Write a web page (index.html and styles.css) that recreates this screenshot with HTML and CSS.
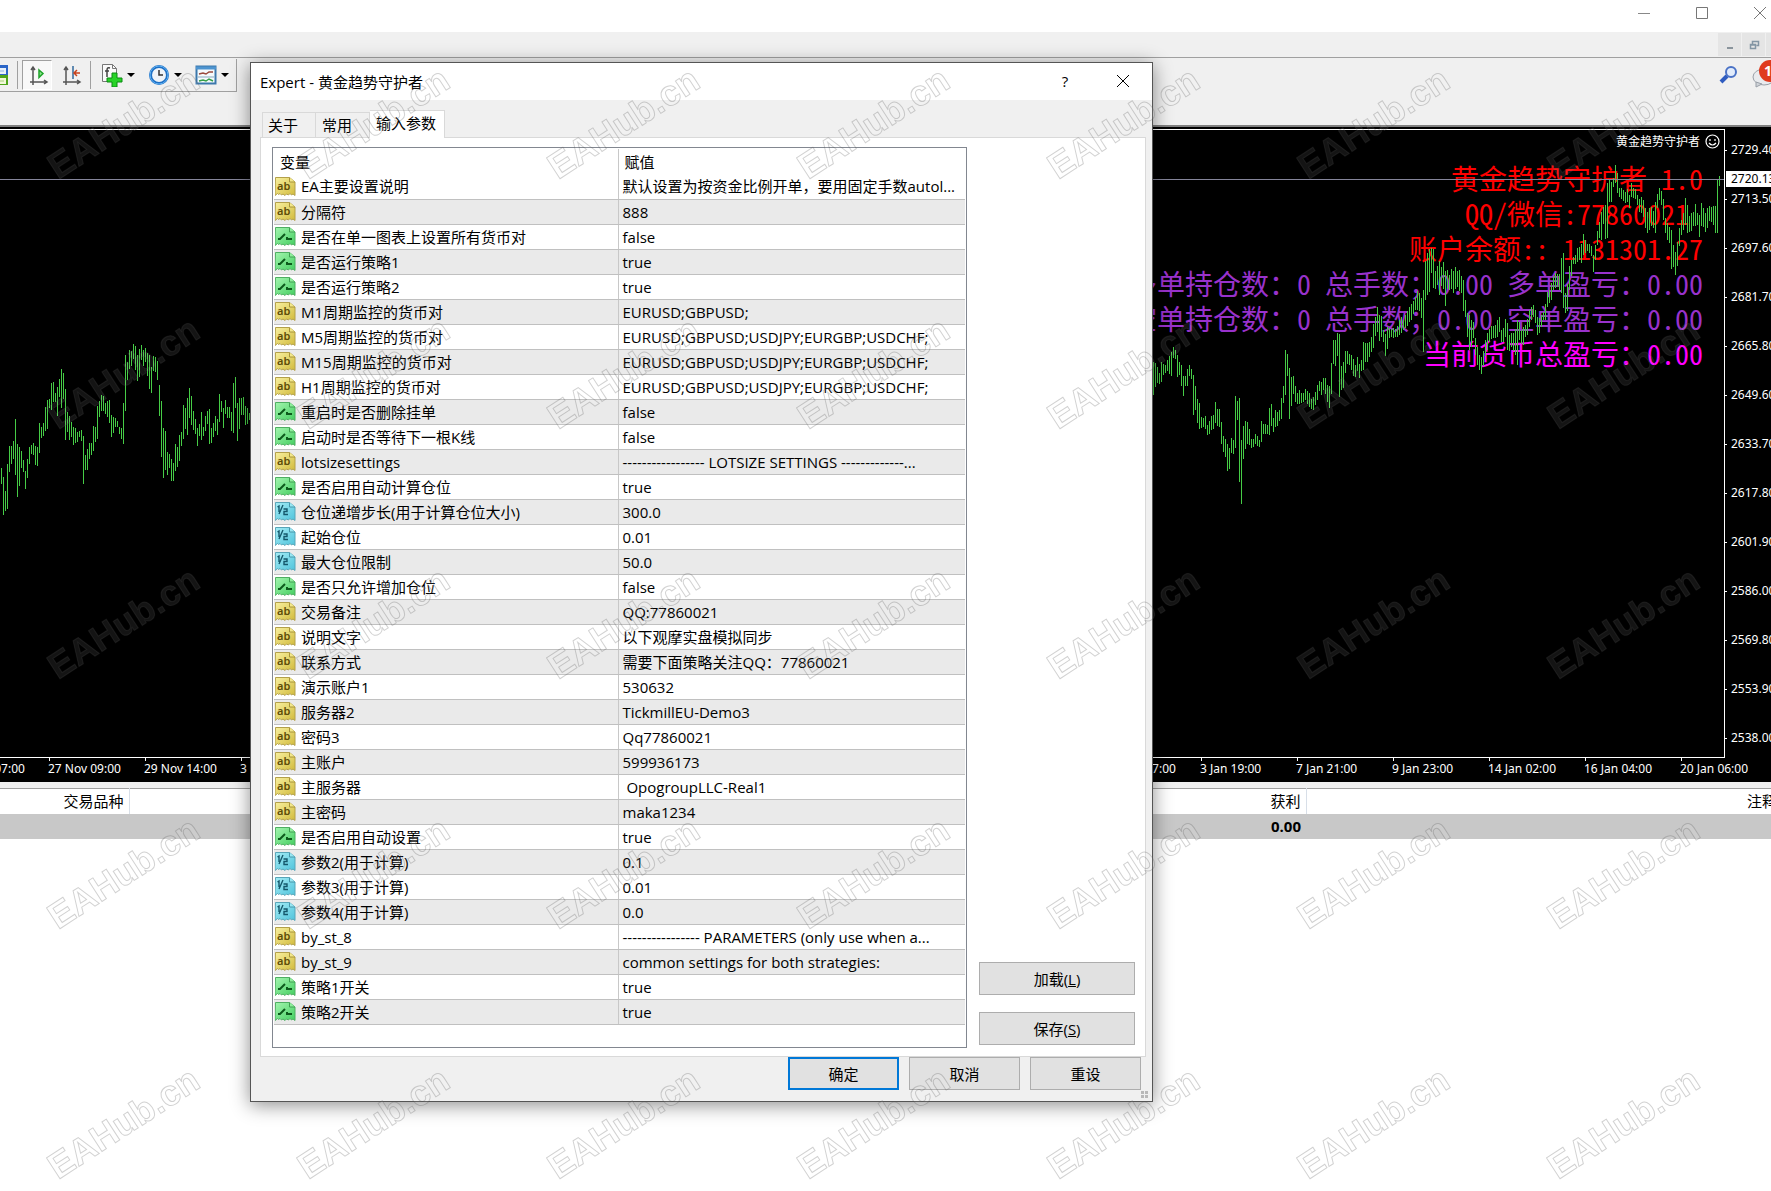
FILE: index.html
```html
<!DOCTYPE html>
<html lang="zh-CN">
<head>
<meta charset="UTF-8" />
<title>Expert - 黄金趋势守护者</title>
<link rel="stylesheet" href="styles.css">
</head>
<body>

<!-- 图标 -->
<svg class="defs" aria-hidden="true">
  <defs>
    <linearGradient id="g-str" x1="0" y1="0" x2="1" y2="1"><stop offset="0" stop-color="#f8f0a0"/><stop offset="1" stop-color="#d2bb3c"/></linearGradient>
    <linearGradient id="g-bool" x1="0" y1="0" x2="1" y2="1"><stop offset="0" stop-color="#a4f5b0"/><stop offset="1" stop-color="#45cf61"/></linearGradient>
    <linearGradient id="g-num" x1="0" y1="0" x2="1" y2="1"><stop offset="0" stop-color="#a5ecf5"/><stop offset="1" stop-color="#50c4dc"/></linearGradient>
    <path id="sheet" d="M.5 1.5h14l5.500 4.500v13.500l-2-1.500-1.500 1-1.500-1.500-1.500 1.500-2-1-1.500 1.500-2-1.500-1.500 1-1.500-1.500-1.500 1-1-1-2.500 2z"/>
    <symbol id="i-str" viewBox="0 0 21 21">
      <use href="#sheet" fill="url(#g-str)" stroke="#b3a04a"/>
      <path d="M14.500 1.500v4.500h5.500" fill="#f3e98c" stroke="#a8943a"/>
      <text x="2" y="14" font-family="Noto Sans, sans-serif" font-size="11" font-weight="600" fill="#5e4c08">ab</text>
    </symbol>
    <symbol id="i-bool" viewBox="0 0 21 21">
      <use href="#sheet" fill="url(#g-bool)" stroke="#4fae62"/>
      <path d="M14.500 1.500v4.500h5.500" fill="#8ff09c" stroke="#3f9f52"/>
      <path d="M3 13h2l5-5M12 11v2h5" fill="none" stroke="#0d5a1c" stroke-width="2"/>
    </symbol>
    <symbol id="i-num" viewBox="0 0 21 21">
      <use href="#sheet" fill="url(#g-num)" stroke="#58a5b8"/>
      <path d="M14.500 1.500v4.500h5.500" fill="#9ae8f3" stroke="#4696aa"/>
      <path d="M2.500 6l1.500-1v6M8 4l-4 9M8.500 8h3.500v2.500h-3v3h4" fill="none" stroke="#14586c" stroke-width="1.400"/>
    </symbol>
  </defs>
</svg>

<div class="app">
  <header class="titlebar">
    <button aria-label="最小化"><svg width="14" height="14"><path d="M1 7.500h12" stroke="#888"/></svg></button>
    <button aria-label="最大化"><svg width="14" height="14"><path d="M1.500 1.500h11v11h-11z" fill="none" stroke="#777"/></svg></button>
    <button aria-label="关闭"><svg width="14" height="14"><path d="M1 1l12 12M13 1l-12 12" stroke="#777"/></svg></button>
  </header>

  <div class="menubar">
    <button aria-label="最小化图表"><svg width="12" height="12"><path d="M3 9h6" stroke="#8a949c" stroke-width="2"/></svg></button>
    <button aria-label="还原图表"><svg width="12" height="12"><path d="M4.500 5v-2.500h6v4h-2M4 2.500h7M2.500 5.500h5v4h-5zM2 6h6" fill="none" stroke="#8496a4" stroke-width="1.500"/></svg></button>
    <button aria-label="关闭图表"></button>
  </div>

  <div class="toolbar">
    <div class="tools">
      <button class="tool cut" aria-label="图表窗口">
        <svg width="24" height="24"><path d="M0 2h24v10H0z" fill="#2c66c8"/><path d="M0 5h22v6H0z" fill="#e7f0fb"/><path d="M0 8h20" stroke="#8fb2e6"/><path d="M0 12h24v10H0z" fill="#4fa51c"/><path d="M0 15h22v6H0z" fill="#f2f8da"/><path d="M0 18h20" stroke="#a8cf78"/></svg>
      </button>
      <span class="sep"></span>
      <button class="tool pressed" aria-label="自动滚动">
        <svg width="22" height="22"><path d="M5 3v18M2 18h17M3 6l2-3 2 3M16 16l3 2-3 2" fill="none" stroke="#555" stroke-width="1.500"/><path d="M11 6l4 3.500-4 4z" fill="#8be88b" stroke="#1fa32a" stroke-width="1.500"/></svg>
      </button>
      <button class="tool" aria-label="图表平移">
        <svg width="22" height="22"><path d="M5 3v18M2 18h17M3 6l2-3 2 3M16 16l3 2-3 2" fill="none" stroke="#555" stroke-width="1.500"/><path d="M12 2v13" stroke="#31689c" stroke-width="1.500"/><path d="M13 9h6M16 6l-3 3 3 3" fill="none" stroke="#c8421c" stroke-width="1.500"/></svg>
      </button>
      <span class="sep"></span>
      <button class="tool drop" aria-label="指标">
        <svg width="22" height="24"><path d="M1.500 1.500h10l4 4v13h-14z" fill="#fafafa" stroke="#777"/><path d="M11.500 1.500v4h4" fill="none" stroke="#777"/><path d="M9 5c-3-1-3 1-3 3v6M4 8h4" fill="none" stroke="#444" stroke-width="1.500"/><path d="M11 10h5v5h5v4h-5v5h-5v-5H6v-4h5z" fill="#27d327" stroke="#0a8a12"/></svg>
      </button>
      <button class="tool drop" aria-label="周期">
        <svg width="22" height="22"><circle cx="11" cy="11" r="10" fill="#1d6fc6"/><circle cx="11" cy="11" r="9" fill="none" stroke="#63b4f2"/><circle cx="11" cy="11" r="7" fill="#eef3f8"/><path d="M11 6v5h4" fill="none" stroke="#333" stroke-width="1.500"/></svg>
      </button>
      <button class="tool drop" aria-label="模板">
        <svg width="22" height="22"><path d="M1.500 2.500h19v17h-19z" fill="#f5fafc" stroke="#3c78ac" stroke-width="2"/><path d="M1 4h20" stroke="#4d94d0" stroke-width="3"/><path d="M4 10l4-1 3 1 3-2h4" fill="none" stroke="#9a4a3c" stroke-width="1.500"/><path d="M3 13h16" stroke="#89a9bf"/><path d="M4 17l4-1 3 1 3-2 4 2" fill="none" stroke="#35a048" stroke-width="1.500"/></svg>
      </button>
    </div>
    <div class="alerts">
      <button class="tool" aria-label="搜索">
        <svg width="20" height="20"><circle cx="12" cy="7" r="5" fill="#e2ecfb" stroke="#4a72c6" stroke-width="2"/><path d="M8 11l-6 6" stroke="#2f5cc0" stroke-width="4"/></svg>
      </button>
      <button class="tool bubble" aria-label="消息">
        <svg width="34" height="30"><ellipse cx="13" cy="17" rx="11" ry="8" fill="#e9ebee" stroke="#9aa0a8"/><path d="M5 22l0 5 6-3z" fill="#cfd3d8" stroke="#9aa0a8"/><circle cx="19" cy="11" r="11" fill="#e03a1e"/><text x="13" y="16" font-family="Noto Sans, sans-serif" font-size="14" font-weight="700" fill="#fff">1</text></svg>
      </button>
    </div>
  </div>

  <main class="chart">
    <div class="plot">
      <div class="ea-name">黄金趋势守护者
        <svg width="15" height="15"><circle cx="7.500" cy="7.500" r="6.500" fill="none" stroke="#fff" stroke-width="1.200"/><path d="M5 5v2M10 5v2M4 9q3.500 4 7 0" fill="none" stroke="#fff" stroke-width="1.200"/></svg>
      </div>
      <div class="comment">
        <p class="red">黄金趋势守护者 1.0</p>
        <p class="red">QQ/微信:77860021 </p>
        <p class="red">账户余额:: 1131301.27</p>
        <p class="purple">多单持仓数：0 总手数；0.00 多单盈亏：0.00</p>
        <p class="purple">空单持仓数：0 总手数；0.00 空单盈亏：0.00</p>
        <p class="magenta">当前货币总盈亏：0.00</p>
      </div>
      <svg class="bars" aria-hidden="true"><path id="bars"/><path class="bid" d="M0 49.500h4000"/></svg>
    </div>
    <div class="prices" id="prices">
      <span class="bid-price">2720.13</span>
    </div>
    <div class="times" id="times"></div>
  </main>

  <section class="terminal">
    <table>
      <thead>
        <tr><th class="c-symbol">交易品种</th><th class="c-profit">获利</th><th>注释</th></tr>
      </thead>
      <tbody>
        <tr><td></td><td>0.00</td><td></td></tr>
      </tbody>
    </table>
  </section>
</div>

<div class="dialog" role="dialog" aria-labelledby="dlg-title">
  <div class="dialog-title">
    <h1 id="dlg-title">Expert - 黄金趋势守护者</h1>
    <button aria-label="帮助">?</button>
    <button aria-label="关闭"><svg width="14" height="14"><path d="M1 1l12 12M13 1l-12 12" stroke="#000"/></svg></button>
  </div>
  <div class="tabs" role="tablist">
    <button class="tab" role="tab">关于</button>
    <button class="tab" role="tab">常用</button>
    <button class="tab active" role="tab" aria-selected="true">输入参数</button>
  </div>
  <div class="panel">
    <div class="params">
      <table>
        <thead><tr><th>变量</th><th>赋值</th></tr></thead>
        <tbody id="rows"></tbody>
      </table>
    </div>
    <div class="side">
      <button class="btn">加载(<u>L</u>)</button>
      <button class="btn">保存(<u>S</u>)</button>
    </div>
  </div>
  <div class="footer">
    <button class="btn primary">确定</button>
    <button class="btn">取消</button>
    <button class="btn">重设</button>
  </div>
  <svg class="grip" width="8" height="8"><path d="M0 0h3v3H0zM4 0h3v3H4zM0 4h3v3H0zM4 4h3v3H4z" fill="#b8b8b8"/></svg>
</div>

<!-- 水印 -->
<svg class="watermark" aria-hidden="true">
  <defs>
    <pattern id="wm" width="250" height="250" patternUnits="userSpaceOnUse">
      <text x="58" y="180" transform="rotate(-33 58 180)">EAHub.cn</text>
    </pattern>
  </defs>
  <rect width="100%" height="100%" fill="url(#wm)"/>
</svg>

<script src="script.js"></script>
</body>
</html>
```
FILE: styles.css
```css
* { box-sizing: border-box; }
body {
  margin: 0;
  min-height: 100vh;
  position: relative;
  overflow: hidden;
  background: #fff;
  color: #000;
  font-family: "Open Sans", "Noto Sans CJK SC", sans-serif;
  font-size: 15px;
}
button {
  font: inherit;
  color: inherit;
  padding: 0;
  border: none;
  background: none;
}
svg { display: block; }
.defs {
  position: absolute;
  width: 0;
  height: 0;
}
.app {
  display: flex;
  flex-direction: column;
  min-height: 100vh;
}

/* 主窗口标题栏 */
.titlebar {
  display: flex;
  justify-content: flex-end;
  height: 32px;
  margin-right: -18px;
  padding-bottom: 6px;
}
.titlebar button {
  display: grid;
  place-items: center;
  width: 58px;
}
.menubar {
  display: flex;
  justify-content: flex-end;
  gap: 1px;
  height: 26px;
  margin-right: -18px;
  padding: 1px 0;
  background: #f0f0f0;
  border-bottom: 1px solid #a0a0a0;
}
.menubar button {
  display: grid;
  place-items: center;
  width: 23px;
  background: #e5e5e5;
}

/* 工具栏 */
.toolbar {
  display: flex;
  justify-content: space-between;
  align-items: flex-start;
  height: 69px;
  padding-top: 1px;
  background: #f0f0f0;
  border-bottom: 2px solid #808080;
}
.tools {
  display: flex;
  align-items: center;
  width: 237px;
  height: 33px;
  border: 1px solid #a0a0a0;
  border-width: 0 1px 1px 0;
}
.tool {
  display: flex;
  align-items: center;
}
.tool svg { flex: none; }
.cut {
  width: 8px;
  margin-right: 9px;
  overflow: hidden;
  justify-content: flex-end;
}
.sep {
  width: 1px;
  height: 28px;
  margin-right: 4px;
  background: #a0a0a0;
}
.pressed {
  width: 31px;
  height: 30px;
  margin-right: 9px;
  padding-left: 5px;
  background: #f8f8f8;
  border: 1px solid #a0a0a0;
  border-color: #a0a0a0 #fff #fff #a0a0a0;
}
.pressed + .tool { margin-right: 7px; }
.drop {
  gap: 4px;
  margin-left: 6px;
  margin-right: 7px;
}
.drop::after {
  content: "";
  border: 4px solid transparent;
  border-top-color: #000;
  border-bottom: 0;
}
.alerts {
  display: flex;
  align-items: center;
  gap: 12px;
  margin-right: -14px;
  padding-top: 1px;
}

/* 图表 */
.chart {
  display: grid;
  grid-template-columns: minmax(0, 1fr) 46px;
  padding-top: 2px;
  background: #000;
  color: #fff;
  font-family: "Noto Sans", "Noto Sans CJK SC", sans-serif;
  font-size: 12px;
  line-height: 16px;
}
.plot {
  position: relative;
  height: 629px;
  overflow: hidden;
  border: 1px solid #fff;
  border-left: 0;
}
.ea-name {
  display: flex;
  justify-content: flex-end;
  gap: 5px;
  padding: 4px 4px 3px;
}
.comment {
  padding: 8px 21px 0 0;
  font-family: "Noto Sans CJK SC", sans-serif;
  font-size: 28px;
  font-feature-settings: "hwid";
  line-height: 35px;
}
.comment p {
  display: flex;
  justify-content: flex-end;
  margin: 0;
  white-space: pre;
}
.red { color: #f00; }
.purple { color: #9932cc; }
.magenta { color: #f0f; }
.bars {
  position: absolute;
  inset: 0;
  width: 100%;
  height: 100%;
  fill: none;
  stroke: #46cc46;
}
.bars .bid { stroke: #85859a; }
.prices {
  position: relative;
  display: flex;
  flex-direction: column;
  justify-content: space-between;
  padding: 13px 0 12px;
  overflow: hidden;
}
.price {
  display: flex;
  align-items: center;
  gap: 4px;
}
.price::before {
  content: "";
  flex: none;
  width: 2px;
  height: 1px;
  background: #fff;
}
.bid-price {
  position: absolute;
  top: 42px;
  left: 1px;
  width: 60px;
  padding-left: 5px;
  background: #fff;
  color: #000;
}
.times {
  grid-column: 1 / -1;
  display: flex;
  height: 24px;
  margin-left: -48px;
  overflow: hidden;
}
.time {
  flex: none;
  width: 96px;
  white-space: nowrap;
}
.time::before {
  content: "";
  display: block;
  width: 1px;
  height: 3px;
  margin-left: 1px;
  background: #fff;
}

/* 终端 */
.terminal {
  flex: 1;
  margin-right: -12px;
  border-top: 6px solid #f0f0f0;
}
.terminal table {
  width: 100%;
  table-layout: fixed;
  border-collapse: collapse;
  border-top: 1px solid #a0a0a0;
  line-height: 25px;
  text-align: right;
}
.terminal th {
  padding: 0 5px;
  border-right: 1px solid #d8dfe8;
  font-weight: 400;
}
.terminal td {
  height: 25px;
  padding: 0 5px;
  background: #c8c8c8;
  font-weight: 700;
}
.c-symbol { width: 129px; }
.c-profit { width: 1177px; }

/* EA 属性对话框 */
.dialog {
  position: absolute;
  top: 62px;
  left: 250px;
  width: 903px;
  background: #f0f0f0;
  border: 1px solid #555;
  box-shadow: 0 3px 18px rgba(0, 0, 0, 0.45);
}
.dialog-title {
  display: flex;
  align-items: center;
  height: 37px;
  padding-left: 9px;
  padding-bottom: 1px;
  background: #fff;
}
.dialog-title h1 {
  flex: 1;
  margin: 0;
  font-size: 15px;
  font-weight: 400;
}
.dialog-title button {
  display: grid;
  place-items: center;
  width: 58px;
  height: 36px;
}
.tabs {
  display: flex;
  align-items: flex-end;
  padding: 10px 11px 0;
}
.tab {
  width: 54px;
  height: 25px;
  padding-left: 5px;
  border: 1px solid #d9d9d9;
  border-bottom: 0;
  line-height: 24px;
  text-align: left;
}
.tab + .tab {
  padding-left: 6px;
  border-left: 0;
}
.tab.active {
  position: relative;
  width: 75px;
  height: 28px;
  margin-bottom: -1px;
  padding-bottom: 3px;
  background: #fff;
}
.panel {
  display: flex;
  gap: 12px;
  margin: 0 6px 0 9px;
  padding: 9px 10px 8px 11px;
  background: #fff;
  border: 1px solid #d9d9d9;
}
.params {
  flex: 1;
  min-width: 0;
  padding: 1px 1px 22px;
  border: 1px solid #828790;
}
.params table {
  width: 100%;
  table-layout: fixed;
  border-collapse: collapse;
}
.params th,
.params td {
  height: 25px;
  padding: 0 4px;
  font-weight: 400;
  line-height: 24px;
  text-align: left;
  white-space: nowrap;
  overflow: hidden;
  text-overflow: ellipsis;
}
.params th { padding-left: 6px; }
.params td { border-bottom: 1px solid #c0c0c0; }
.params th:first-child,
.params td:first-child {
  width: 344px;
  border-right: 1px solid #c8c8c8;
}
.params td:first-child { padding-left: 1px; }
.params tr:nth-child(even) td { background: #eaeaea; }
.name {
  display: flex;
  align-items: center;
  gap: 5px;
}
.side {
  display: flex;
  flex-direction: column;
  justify-content: flex-end;
  gap: 17px;
  width: 156px;
  padding-bottom: 3px;
}
.btn {
  height: 33px;
  background: #e1e1e1;
  border: 1px solid #adadad;
}
.footer {
  display: flex;
  justify-content: flex-end;
  gap: 10px;
  padding: 0 11px 11px;
}
.footer .btn { width: 111px; }
.btn.primary { border: 2px solid #0078d7; }
.grip {
  position: absolute;
  right: 3px;
  bottom: 2px;
}

.watermark {
  position: absolute;
  inset: 0;
  width: 100%;
  height: 100%;
  pointer-events: none;
}
.watermark text {
  font-family: "Liberation Sans", sans-serif;
  font-size: 36px;
  font-weight: 700;
  fill: rgba(255, 255, 255, 0.08);
  stroke: rgba(70, 70, 70, 0.25);
}
```
FILE: script.js
```js
// 参数列表：类型、名称、值
const params = [
  ['str', 'EA主要设置说明', '默认设置为按资金比例开单，要用固定手数autol...'],
  ['str', '分隔符', '888'],
  ['bool', '是否在单一图表上设置所有货币对', 'false'],
  ['bool', '是否运行策略1', 'true'],
  ['bool', '是否运行策略2', 'true'],
  ['str', 'M1周期监控的货币对', 'EURUSD;GBPUSD;'],
  ['str', 'M5周期监控的货币对', 'EURUSD;GBPUSD;USDJPY;EURGBP;USDCHF;'],
  ['str', 'M15周期监控的货币对', 'EURUSD;GBPUSD;USDJPY;EURGBP;USDCHF;'],
  ['str', 'H1周期监控的货币对', 'EURUSD;GBPUSD;USDJPY;EURGBP;USDCHF;'],
  ['bool', '重启时是否删除挂单', 'false'],
  ['bool', '启动时是否等待下一根K线', 'false'],
  ['str', 'lotsizesettings', '----------------- LOTSIZE SETTINGS -------------...'],
  ['bool', '是否启用自动计算仓位', 'true'],
  ['num', '仓位递增步长(用于计算仓位大小)', '300.0'],
  ['num', '起始仓位', '0.01'],
  ['num', '最大仓位限制', '50.0'],
  ['bool', '是否只允许增加仓位', 'false'],
  ['str', '交易备注', 'QQ:77860021'],
  ['str', '说明文字', '以下观摩实盘模拟同步'],
  ['str', '联系方式', '需要下面策略关注QQ：77860021'],
  ['str', '演示账户1', '530632'],
  ['str', '服务器2', 'TickmillEU-Demo3'],
  ['str', '密码3', 'Qq77860021'],
  ['str', '主账户', '599936173'],
  ['str', '主服务器', '\u00a0OpogroupLLC-Real1'],
  ['str', '主密码', 'maka1234'],
  ['bool', '是否启用自动设置', 'true'],
  ['num', '参数2(用于计算)', '0.1'],
  ['num', '参数3(用于计算)', '0.01'],
  ['num', '参数4(用于计算)', '0.0'],
  ['str', 'by_st_8', '---------------- PARAMETERS (only use when a...'],
  ['str', 'by_st_9', 'common settings for both strategies:'],
  ['bool', '策略1开关', 'true'],
  ['bool', '策略2开关', 'true'],
];

document.getElementById('rows').innerHTML = params.map(([type, name, value]) => `
  <tr>
    <td><span class="name"><svg width="21" height="21"><use href="#i-${type}"/></svg>${name}</span></td>
    <td>${value}</td>
  </tr>`).join('');

// 坐标轴
const prices = ['2729.40', '2713.50', '2697.60', '2681.70', '2665.80', '2649.60', '2633.70',
  '2617.80', '2601.90', '2586.00', '2569.80', '2553.90', '2538.00'];
document.getElementById('prices').insertAdjacentHTML('beforeend',
  prices.map(p => `<span class="price">${p}</span>`).join(''));

const times = ['25 Nov 07:00', '27 Nov 09:00', '29 Nov 14:00', '3 Dec 16:00', '', '', '', '', '', '', '', '',
  '31 Dec 17:00', '3 Jan 19:00', '7 Jan 21:00', '9 Jan 23:00', '14 Jan 02:00', '16 Jan 04:00', '20 Jan 06:00'];
document.getElementById('times').innerHTML = times.map(t => `<span class="time">${t}</span>`).join('');

// K线：每根 高,低（单位 1/3 像素），间隔 2 像素
const series = [
  { x: 1, y: 190, bars: '443,491 470,584 512,573 432,567 378,455 378,432 362,417 297,465 372,530 381,498 393,443 420,455 453,506 417,475 381,432 374,402 368,405 378,435 380,437 309,398 320,353 309,347 261,332 240,326 237,264 188,270 185,245 220,245 200,288 177,230 147,264 158,236 207,360 275,335 288,360 305,350 320,374 323,368 335,366 333,350 329,362 347,491 404,449 386,449 368,416 368,405 317,393 320,365 258,357 242,290 225,273 229,272 249,282 243,290 240,308 285,350 291,338 294,320 303,321 320,342 323,357 249,371 105,272 126,180 90,148 93,137 72,118 78,150 104,182 86,170 75,120 90,138 84,125 99,168 105,207 140,218 108,153 111,156 122,180 195,288 242,410 323,474 333,450 396,465 402,443 417,483 428,483 372,453 380,440 345,423 336,378 255,357 264,326 234,345 204,294 228,315 273,330 297,342 324,377 312,347 276,360 320,347 288,332 273,312 267,371 323,368 309,350 288,332 297,345 222,306 243,276 264,324 240,281 261,294 261,294 276,332 188,338 171,264 249,362 234,327 234,285 231,285 258,315 264,311 279,300' },
  { x: 1153, y: 100, bars: '395,494 398,470 410,458 428,462 395,455 401,434 404,428 389,422 377,432 365,437 351,383 360,387 375,440 396,434 405,468 437,497 437,467 417,467 404,437 417,448 434,554 467,540 507,578 519,597 561,594 564,592 558,596 585,614 573,613 558,599 555,596 516,578 537,588 537,592 576,641 618,665 627,680 642,722 653,716 625,670 630,672 498,654 513,569 504,755 630,822 588,686 573,657 576,641 597,644 627,654 627,650 611,641 617,648 630,650 573,636 582,611 583,612 585,612 534,614 522,588 564,606 540,591 546,587 541,572 504,566 467,518 360,494 372,437 413,566 441,527 438,491 467,516 489,521 480,521 489,518 489,515 477,509 483,521 489,531 507,537 500,540 486,524 464,509 453,482 456,495 444,480 444,491 465,516 467,533 400,491 330,402 330,407 309,377 312,500 408,479 395,473 363,428 363,402 372,404 375,420 387,437 404,440 381,422 402,444 390,423 336,419 338,395 338,397 336,380 320,365 282,353 261,317 231,305 255,333 258,321 300,335 312,377 290,356 294,325 297,322 294,325 297,322 288,320 270,315 261,308 270,300 255,295 243,287 231,275 222,270 213,252 201,240 183,240 189,243 204,265 180,365 92,210 70,195 56,186 53,129 56,173 123,177 108,165 93,195 110,168 96,177 123,227 120,177 135,180 117,178 123,188 111,177 123,171 120,183' },
  { x: 1461, y: -10, bars: '467,520 480,573 540,590 580,650 585,690 600,680 605,655 655,705 680,735 705,750 712,762 693,738 660,708 640,690 628,665 618,657 618,655 615,655 600,650 590,635 630,665 625,665 598,650 610,690 645,692 640,680 640,693 628,705 600,735 605,660 630,672 620,675 615,650 597,645 570,620 560,600 555,590 570,610 590,645 595,640 585,622 575,600 553,600 515,560 510,550 490,540 468,510 460,503 462,500 462,510 415,520 398,565 520,578 492,572 438,510 420,468 410,433 405,432 385,425 382,420 372,428 343,405 360,400 372,392 373,398 378,408 405,455 375,420 332,375 305,355 275,360 262,312 255,357 190,353 180,245 185,245 175,200 135,190 160,220 203,230 205,237 210,243 217,250 207,245 225,263 190,232 205,235 208,238 225,255 238,275 230,280 240,290 263,325 275,338 265,330 262,318 272,325 245,338 222,265 205,240 213,255 238,300 295,340 310,360 320,370 330,448 375,440 395,464 365,438 325,378 300,345 280,330 235,315 255,338 288,335 280,332 275,318 253,318 278,315 285,350 250,318 263,320 280,335 265,325 258,302 260,305 258,315 257,338 180,338 168,198' },
];
let d = '';
series.forEach(s => {
  s.bars.split(' ').forEach((bar, i) => {
    const [high, low] = bar.split(',').map(v => Math.round(v / 3) + s.y);
    d += `M${s.x + i * 2 + 0.5} ${high}V${low}`;
  });
});
document.getElementById('bars').setAttribute('d', d);
```
